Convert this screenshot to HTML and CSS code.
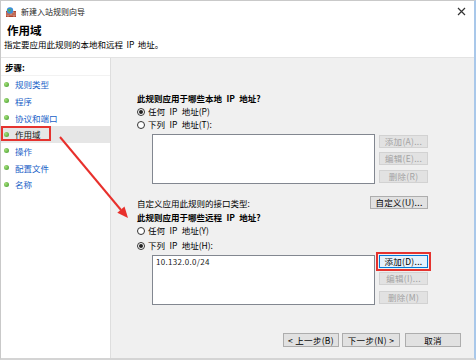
FILE: index.html
```html
<!DOCTYPE html>
<html lang="zh-CN">
<head>
    <meta charset="UTF-8">
    <title>新建入站规则向导</title>
    <link rel="stylesheet" href="styles.css">
</head>
<body>
    <div class="window">
        <div class="titlebar">
            <svg class="app-icon" width="10" height="10" viewBox="0 0 10 10">
                <rect x="0" y="4" width="10" height="6" fill="#b0452f"/>
                <path d="M0 6h10M0 8h10M3 4v2M7 4v2M5 6v2M2 8v2M8 8v2" stroke="#e8c6b8" stroke-width="0.6"/>
                <circle cx="4" cy="3.5" r="3.2" fill="#3c8fd6"/>
                <path d="M2 2.5c1-1 2 0 2.5-0.5S5 4 3.5 5C2.5 5 2 4 2 2.5z" fill="#5bb34a"/>
            </svg>
            <span class="title">新建入站规则向导</span>
            <svg class="close" width="9" height="9" viewBox="0 0 9 9">
                <path d="M1 1l7 7M8 1l-7 7" stroke="#333" stroke-width="1.2"/>
            </svg>
        </div>

        <div class="header">
            <h1>作用域</h1>
            <p>指定要应用此规则的本地和远程 IP 地址。</p>
        </div>

        <div class="body">
            <div class="steps">
                <div class="steps-title">步骤:</div>
                <div class="step"><i class="dot"></i>规则类型</div>
                <div class="step"><i class="dot"></i>程序</div>
                <div class="step"><i class="dot"></i>协议和端口</div>
                <div class="step active"><i class="dot"></i>作用域</div>
                <div class="step"><i class="dot"></i>操作</div>
                <div class="step"><i class="dot"></i>配置文件</div>
                <div class="step"><i class="dot"></i>名称</div>
            </div>

            <div class="content">
                <div class="form">
                    <div class="question">此规则应用于哪些本地 IP 地址?</div>
                    <div class="radio"><i class="circle checked"></i>任何 IP 地址(P)</div>
                    <div class="radio"><i class="circle"></i>下列 IP 地址(T):</div>
                    <div class="list-row">
                        <div class="listbox"></div>
                        <div class="side-buttons">
                            <button class="btn disabled">添加(A)...</button>
                            <button class="btn disabled">编辑(E)...</button>
                            <button class="btn disabled gap">删除(R)</button>
                        </div>
                    </div>

                    <div class="custom-row">
                        <span>自定义应用此规则的接口类型:</span>
                        <button class="btn custom">自定义(U)...</button>
                    </div>

                    <div class="question q2">此规则应用于哪些远程 IP 地址?</div>
                    <div class="radio"><i class="circle"></i>任何 IP 地址(Y)</div>
                    <div class="radio r2"><i class="circle checked"></i>下列 IP 地址(H):</div>
                    <div class="list-row">
                        <div class="listbox">
                            <div class="entry">10.132.0.0/24</div>
                        </div>
                        <div class="side-buttons side-buttons-remote">
                            <button class="btn focused">添加(D)...</button>
                            <button class="btn disabled">编辑(I)...</button>
                            <button class="btn disabled gap">删除(M)</button>
                        </div>
                    </div>
                </div>

                <div class="footer">
                    <button class="btn nav">&lt; 上一步(B)</button>
                    <button class="btn nav next">下一步(N) &gt;</button>
                    <button class="btn nav cancel">取消</button>
                </div>
            </div>
        </div>

        <svg class="arrow" width="476" height="360" viewBox="0 0 476 360">
            <line x1="60" y1="137" x2="121" y2="210" stroke="#e8302c" stroke-width="2"/>
            <polygon points="128,218 117.3,212.7 124.5,206.5" fill="#e8302c"/>
        </svg>
    </div>
</body>
</html>
```

FILE: styles.css
```css
body {
    margin: 0;
    font-family: "Noto Sans CJK SC", "Noto Sans", sans-serif;
    font-size: 8.5px;
    color: #000;
    background: #fff;
}
.window {
    position: relative;
    width: 476px;
    height: 360px;
    box-sizing: border-box;
    border-top: 1px solid #c9c9c9;
    border-left: 1px solid #c9c9c9;
    border-right: 2px solid #a9c8ea;
    border-bottom: 2px solid #d4d4d4;
    display: flex;
    flex-direction: column;
    overflow: hidden;
}
.titlebar {
    height: 21px;
    display: flex;
    align-items: center;
    padding-left: 5px;
    background: #fff;
}
.app-icon {
    flex-shrink: 0;
}
.title {
    margin-left: 5px;
    font-size: 8px;
    color: #222;
}
.close {
    margin-left: auto;
    margin-right: 8px;
}
.header {
    height: 35px;
    padding-left: 6px;
    background: #fff;
    border-bottom: 1px solid #e3e3e3;
}
.header h1 {
    margin: 1px 0 0;
    font-size: 11.5px;
    line-height: 14px;
    font-weight: 700;
}
.header p {
    margin: 1px 0 0 -3px;
    font-size: 8.5px;
    line-height: 12px;
    word-spacing: 1.5px;
}

.body {
    flex: 1;
    display: flex;
    min-height: 0;
}
.steps {
    width: 110px;
    box-sizing: border-box;
    background: #fff;
    border-right: 1px solid #dedede;
    flex-shrink: 0;
}
.steps-title {
    height: 18px;
    line-height: 18px;
    padding-left: 4px;
    font-weight: 700;
    border-bottom: 1px solid #f2f2f2;
    box-sizing: border-box;
}
.step {
    position: relative;
    height: 16.65px;
    display: flex;
    align-items: center;
    padding-left: 3px;
    color: #1761c7;
}
.step .dot {
    width: 5px;
    height: 5px;
    border-radius: 50%;
    background: radial-gradient(circle at 35% 35%, #a6e07a, #3f9a2a);
    margin-right: 6px;
}
.step.active {
    background: #e6e6e6;
    color: #111;
}
.step.active::after {
    content: '';
    position: absolute;
    left: 0;
    top: 0;
    width: 50px;
    height: 15px;
    border: 2px solid #e5332f;
    box-sizing: border-box;
}

.content {
    flex: 1;
    background: #f0f0f0;
    display: flex;
    flex-direction: column;
}
.form {
    padding: 34px 46px 0 26px;
    word-spacing: 2.5px;
}
.question {
    height: 13px;
    line-height: 13px;
    font-weight: 700;
}
.question.q2 {
    margin-top: 2px;
}
.radio {
    height: 13px;
    line-height: 13px;
    display: flex;
    align-items: center;
}
.radio.r2 {
    margin-top: 2px;
}
.circle {
    width: 8px;
    height: 8px;
    box-sizing: border-box;
    border: 1px solid #333;
    border-radius: 50%;
    background: #fff;
    margin-right: 3px;
    display: flex;
    align-items: center;
    justify-content: center;
}
.circle.checked::before {
    content: '';
    width: 4px;
    height: 4px;
    border-radius: 50%;
    background: #222;
}
.list-row {
    display: flex;
    margin-top: 3px;
    margin-left: 15px;
    word-spacing: normal;
}
.listbox {
    width: 223px;
    height: 50px;
    box-sizing: border-box;
    border: 1px solid #828790;
    background: #fff;
}
.entry {
    padding: 1px 3px;
    line-height: 10px;
    font-size: 8px;
    color: #222;
    letter-spacing: 0.3px;
}
.side-buttons {
    margin-left: 4px;
    padding-top: 1px;
    display: flex;
    flex-direction: column;
    gap: 4px;
}
.side-buttons .gap {
    margin-top: 1px;
}
.side-buttons-remote {
    padding-top: 0;
}
.side-buttons-remote .gap {
    margin-top: 2px;
}
.btn {
    font-family: inherit;
    font-size: 8.5px;
    height: 13px;
    line-height: 11px;
    padding: 0;
    margin: 0;
    border: 1px solid #adadad;
    background: #e1e1e1;
    color: #000;
    letter-spacing: 0.3px;
}
.side-buttons .btn {
    width: 49px;
}
.btn.disabled {
    background: #e2e2e2;
    border-color: #d2d2d2;
    color: #a3a3a3;
}
.btn.focused {
    border-color: #0078d7;
    background: #e5f1fb;
    outline: 2px solid #e5332f;
    outline-offset: 1px;
}
.custom-row {
    margin-top: 12px;
    display: flex;
    align-items: center;
    justify-content: space-between;
    word-spacing: normal;
}
.btn.custom {
    width: 58px;
}
.footer {
    margin-top: 28px;
    padding-right: 13px;
    display: flex;
    justify-content: flex-end;
}
.btn.nav {
    width: 56px;
    height: 14px;
    line-height: 12px;
}
.btn.next {
    width: 58px;
    margin-left: 3px;
}
.btn.cancel {
    margin-left: 5px;
}
.arrow {
    position: absolute;
    left: -1px;
    top: -1px;
    pointer-events: none;
}
```
